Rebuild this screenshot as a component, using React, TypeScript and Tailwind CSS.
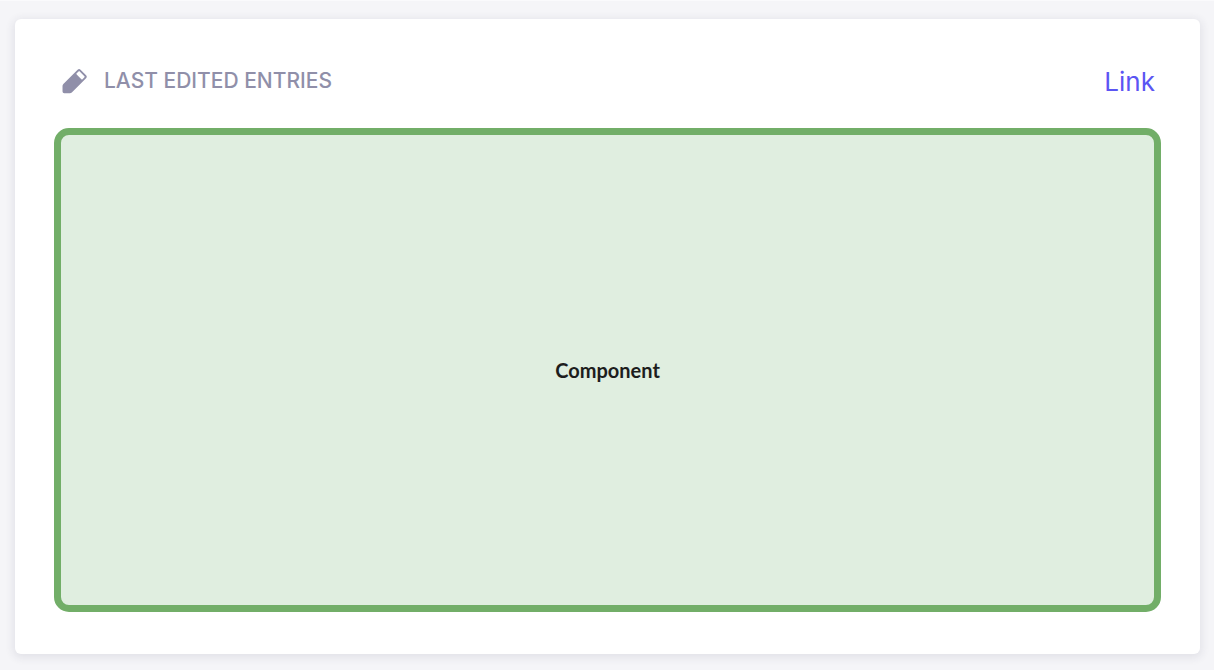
import type { ReactNode } from "react";

function PencilIcon() {
  return (
    <svg className="size-[25px] shrink-0" viewBox="0 0 24 24" fill="none" aria-hidden="true">
      <path
        fill="#908fa9"
        fillRule="evenodd"
        d="M15 .8a2 2 0 0 1 2.8 0l5.3 5.3a2 2 0 0 1 0 2.8L9.4 22.5a2.6 2.6 0 0 1-1.8.8H2.2A1.7 1.7 0 0 1 .5 21.6V16.4c0-.7.3-1.4.8-1.9ZM17 2.3a.8.8 0 0 0-1.1 0l-1.8 1.8a.8.8 0 0 0 0 1.1l4.5 4.6a.8.8 0 0 0 1.1 0l1.8-1.8a.8.8 0 0 0 0-1.1Z"
      />
    </svg>
  );
}

type PanelProps = { title: string; linkText: string; children: ReactNode };

function Panel({ title, linkText, children }: PanelProps) {
  return (
    <section className="flex flex-1 flex-col rounded-md bg-white px-[39px] pt-[38px] pb-[42px] shadow-[0_2px_8px_2px_rgba(40,40,80,0.09)]">
      <header className="mb-[23px] flex h-12 items-center justify-between pr-[6px] pl-2">
        <div className="flex items-center gap-[17px]">
          <PencilIcon />
          <h2 className="text-[21px] font-medium uppercase text-[#908fa9]">{title}</h2>
        </div>
        <a href="#entries" className="text-[26px] text-[#5b55f3]">
          {linkText}
        </a>
      </header>
      {children}
    </section>
  );
}

export default function App() {
  return (
    <main className="flex min-h-screen flex-col border-t border-[#fafafc] bg-[#f5f5f8] pt-[18px] pr-[14px] pb-4 pl-[15px] font-['Inter',sans-serif]">
      <Panel title="Last edited entries" linkText="Link">
        <div className="flex flex-1 items-center justify-center rounded-[15px] border-[7px] border-[#72ae68] bg-[#e0eee0] p-4">
          <p className="font-['Lato',sans-serif] text-[20px] font-bold text-[#1d1d1d]">Component</p>
        </div>
      </Panel>
    </main>
  );
}
